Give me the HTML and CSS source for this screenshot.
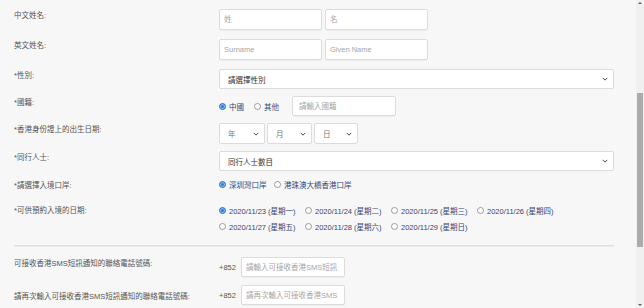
FILE: index.html
```html
<!DOCTYPE html>
<html lang="zh-Hant">
<head>
    <meta charset="UTF-8">
    <meta name="viewport" content="width=device-width, initial-scale=1.0">
    <title>預約入境登記</title>
    <link rel="stylesheet" href="styles.css">
</head>
<body>
    <div class="page">
        <form class="form">
            <div class="row row-name">
                <div class="label">中文姓名:</div>
                <div class="field">
                    <input class="input w-name" type="text" placeholder="姓">
                    <input class="input w-name" type="text" placeholder="名">
                </div>
            </div>

            <div class="row row-name">
                <div class="label">英文姓名:</div>
                <div class="field">
                    <input class="input w-name" type="text" placeholder="Surname">
                    <input class="input w-name" type="text" placeholder="Given Name">
                </div>
            </div>

            <div class="row">
                <div class="label">*性別:</div>
                <div class="field">
                    <div class="select select-full">
                        <span>請選擇性別</span>
                        <svg class="chevron" viewBox="0 0 8 5"><path d="M1 1l3 3 3-3"/></svg>
                    </div>
                </div>
            </div>

            <div class="row">
                <div class="label">*國籍:</div>
                <div class="field">
                    <label class="radio radio-cn"><span class="dot checked"></span>中國</label>
                    <label class="radio radio-other"><span class="dot"></span>其他</label>
                    <input class="input input-short w-nation" type="text" placeholder="請輸入國籍">
                </div>
            </div>

            <div class="row">
                <div class="label">*香港身份證上的出生日期:</div>
                <div class="field field-dob">
                    <div class="select select-year">
                        <span class="muted">年</span>
                        <svg class="chevron" viewBox="0 0 8 5"><path d="M1 1l3 3 3-3"/></svg>
                    </div>
                    <div class="select select-month">
                        <span class="muted">月</span>
                        <svg class="chevron" viewBox="0 0 8 5"><path d="M1 1l3 3 3-3"/></svg>
                    </div>
                    <div class="select select-day">
                        <span class="muted">日</span>
                        <svg class="chevron" viewBox="0 0 8 5"><path d="M1 1l3 3 3-3"/></svg>
                    </div>
                </div>
            </div>

            <div class="row row-tight">
                <div class="label">*同行人士:</div>
                <div class="field">
                    <div class="select select-full">
                        <span>同行人士數目</span>
                        <svg class="chevron" viewBox="0 0 8 5"><path d="M1 1l3 3 3-3"/></svg>
                    </div>
                </div>
            </div>

            <div class="row row-port">
                <div class="label label-mid">*請選擇入境口岸:</div>
                <div class="field">
                    <label class="radio radio-sz"><span class="dot checked"></span>深圳灣口岸</label>
                    <label class="radio"><span class="dot"></span>港珠澳大橋香港口岸</label>
                </div>
            </div>

            <div class="row row-dates">
                <div class="label label-date">*可供預約入境的日期:</div>
                <div class="dates">
                    <label class="radio"><span class="dot checked"></span>2020/11/23 (星期一)</label>
                    <label class="radio"><span class="dot"></span>2020/11/24 (星期二)</label>
                    <label class="radio"><span class="dot"></span>2020/11/25 (星期三)</label>
                    <label class="radio"><span class="dot"></span>2020/11/26 (星期四)</label>
                    <label class="radio"><span class="dot"></span>2020/11/27 (星期五)</label>
                    <label class="radio"><span class="dot"></span>2020/11/28 (星期六)</label>
                    <label class="radio"><span class="dot"></span>2020/11/29 (星期日)</label>
                </div>
            </div>

            <hr class="divider">

            <div class="row row-phone">
                <div class="label label-phone">可接收香港SMS短訊通知的聯絡電話號碼:</div>
                <div class="field">
                    <span class="prefix">+852</span>
                    <input class="input input-short w-phone" type="text" placeholder="請輸入可接收香港SMS短訊">
                </div>
            </div>

            <div class="row">
                <div class="label label-phone2">請再次輸入可接收香港SMS短訊通知的聯絡電話號碼:</div>
                <div class="field">
                    <span class="prefix">+852</span>
                    <input class="input input-short w-phone" type="text" placeholder="請再次輸入可接收香港SMS">
                </div>
            </div>
        </form>

        <div class="scrollbar">
            <span class="arrow arrow-up"></span>
            <div class="thumb"></div>
            <span class="arrow arrow-down"></span>
        </div>
    </div>
</body>
</html>
```

FILE: styles.css
```css
body {
    margin: 0;
    font-family: "Liberation Sans", "Noto Sans CJK TC", sans-serif;
    font-size: 7.5px;
    color: #555;
    background-color: #f7f7f7;
    overflow: hidden;
}

.page {
    display: flex;
    height: 308px;
}

/* Form */
.form {
    flex: 1;
    padding: 9px 0 0 14px;
}

.row {
    display: flex;
    align-items: flex-start;
    margin-bottom: 7px;
}

.row-name { margin-bottom: 9px; }
.row-tight { margin-bottom: 3px; }
.row-port { margin-bottom: 9px; }
.row-dates { margin-bottom: 0; }
.row-phone { margin-bottom: 8px; }

.label {
    width: 205px;
    flex-shrink: 0;
    line-height: 13px;
}

.label-mid { padding-top: 5px; }
.label-date { padding-top: 1px; }
.label-phone { padding-top: 0; }
.label-phone2 { padding-top: 5px; }

.field {
    display: flex;
    align-items: center;
    width: 395px;
    min-height: 20px;
}

.field-dob {
    gap: 2px;
}

/* Inputs */
.input {
    box-sizing: border-box;
    height: 21px;
    padding: 0 4px;
    border: 1px solid #dcdcdc;
    border-radius: 2px;
    background-color: #fff;
    box-shadow: 0 1px 1px rgba(0, 0, 0, 0.04);
    font-family: inherit;
    font-size: 7.5px;
    color: #333;
    outline: none;
}

.input::placeholder {
    color: #a6a6a6;
}

.input-short { height: 20px; }

.w-name { width: 103px; margin-right: 3px; }
.w-nation { width: 104px; padding: 0 6px; }
.w-phone { width: 104px; }

/* Selects */
.select {
    box-sizing: border-box;
    display: flex;
    align-items: center;
    justify-content: space-between;
    height: 20px;
    padding: 0 5px 0 8px;
    border: 1px solid #dcdcdc;
    border-radius: 2px;
    background-color: #fff;
    color: #333;
}

.select-full { width: 395px; }
.select-year { width: 46px; height: 21px; }
.select-month { width: 45px; height: 21px; }
.select-day { width: 44px; height: 21px; }

.muted { color: #777; }

.chevron {
    width: 6px;
    height: 4px;
    fill: none;
    stroke: #444;
    stroke-width: 1.3;
}

/* Radios */
.radio {
    display: inline-flex;
    align-items: center;
    color: #30467a;
    white-space: nowrap;
}

.dot {
    box-sizing: border-box;
    width: 7px;
    height: 7px;
    margin-right: 3px;
    border: 1px solid #999;
    border-radius: 50%;
    background-color: #fff;
}

.dot.checked {
    border: 1px solid #2f7fd9;
    background-color: #2f7fd9;
    box-shadow: inset 0 0 0 1px #8dbbef;
}

.radio-cn { width: 35px; }
.radio-other { width: 38px; }
.radio-sz { width: 55px; }

.dates {
    display: grid;
    grid-template-columns: repeat(4, 86px);
    grid-auto-rows: 16px;
    align-items: center;
    margin-top: -1px;
}

.divider {
    width: 600px;
    margin: 11px 0 10px;
    border: none;
    border-top: 1px solid #dedede;
    border-bottom: 1px solid #ececec;
}

.prefix {
    width: 22px;
    color: #555;
}

/* Scrollbar */
.scrollbar {
    position: relative;
    width: 8px;
    margin-left: 22px;
    background-color: #f0f0f0;
}

.thumb {
    width: 6px;
    height: 154px;
    margin: 93px 0 0 1px;
    background-color: #acacac;
}

.arrow {
    position: absolute;
    left: 2px;
    width: 0;
    height: 0;
    border-left: 2px solid transparent;
    border-right: 2px solid transparent;
}

.arrow-up {
    top: 2px;
    border-bottom: 2px solid #606060;
}

.arrow-down {
    bottom: 2px;
    border-top: 2px solid #606060;
}
```
